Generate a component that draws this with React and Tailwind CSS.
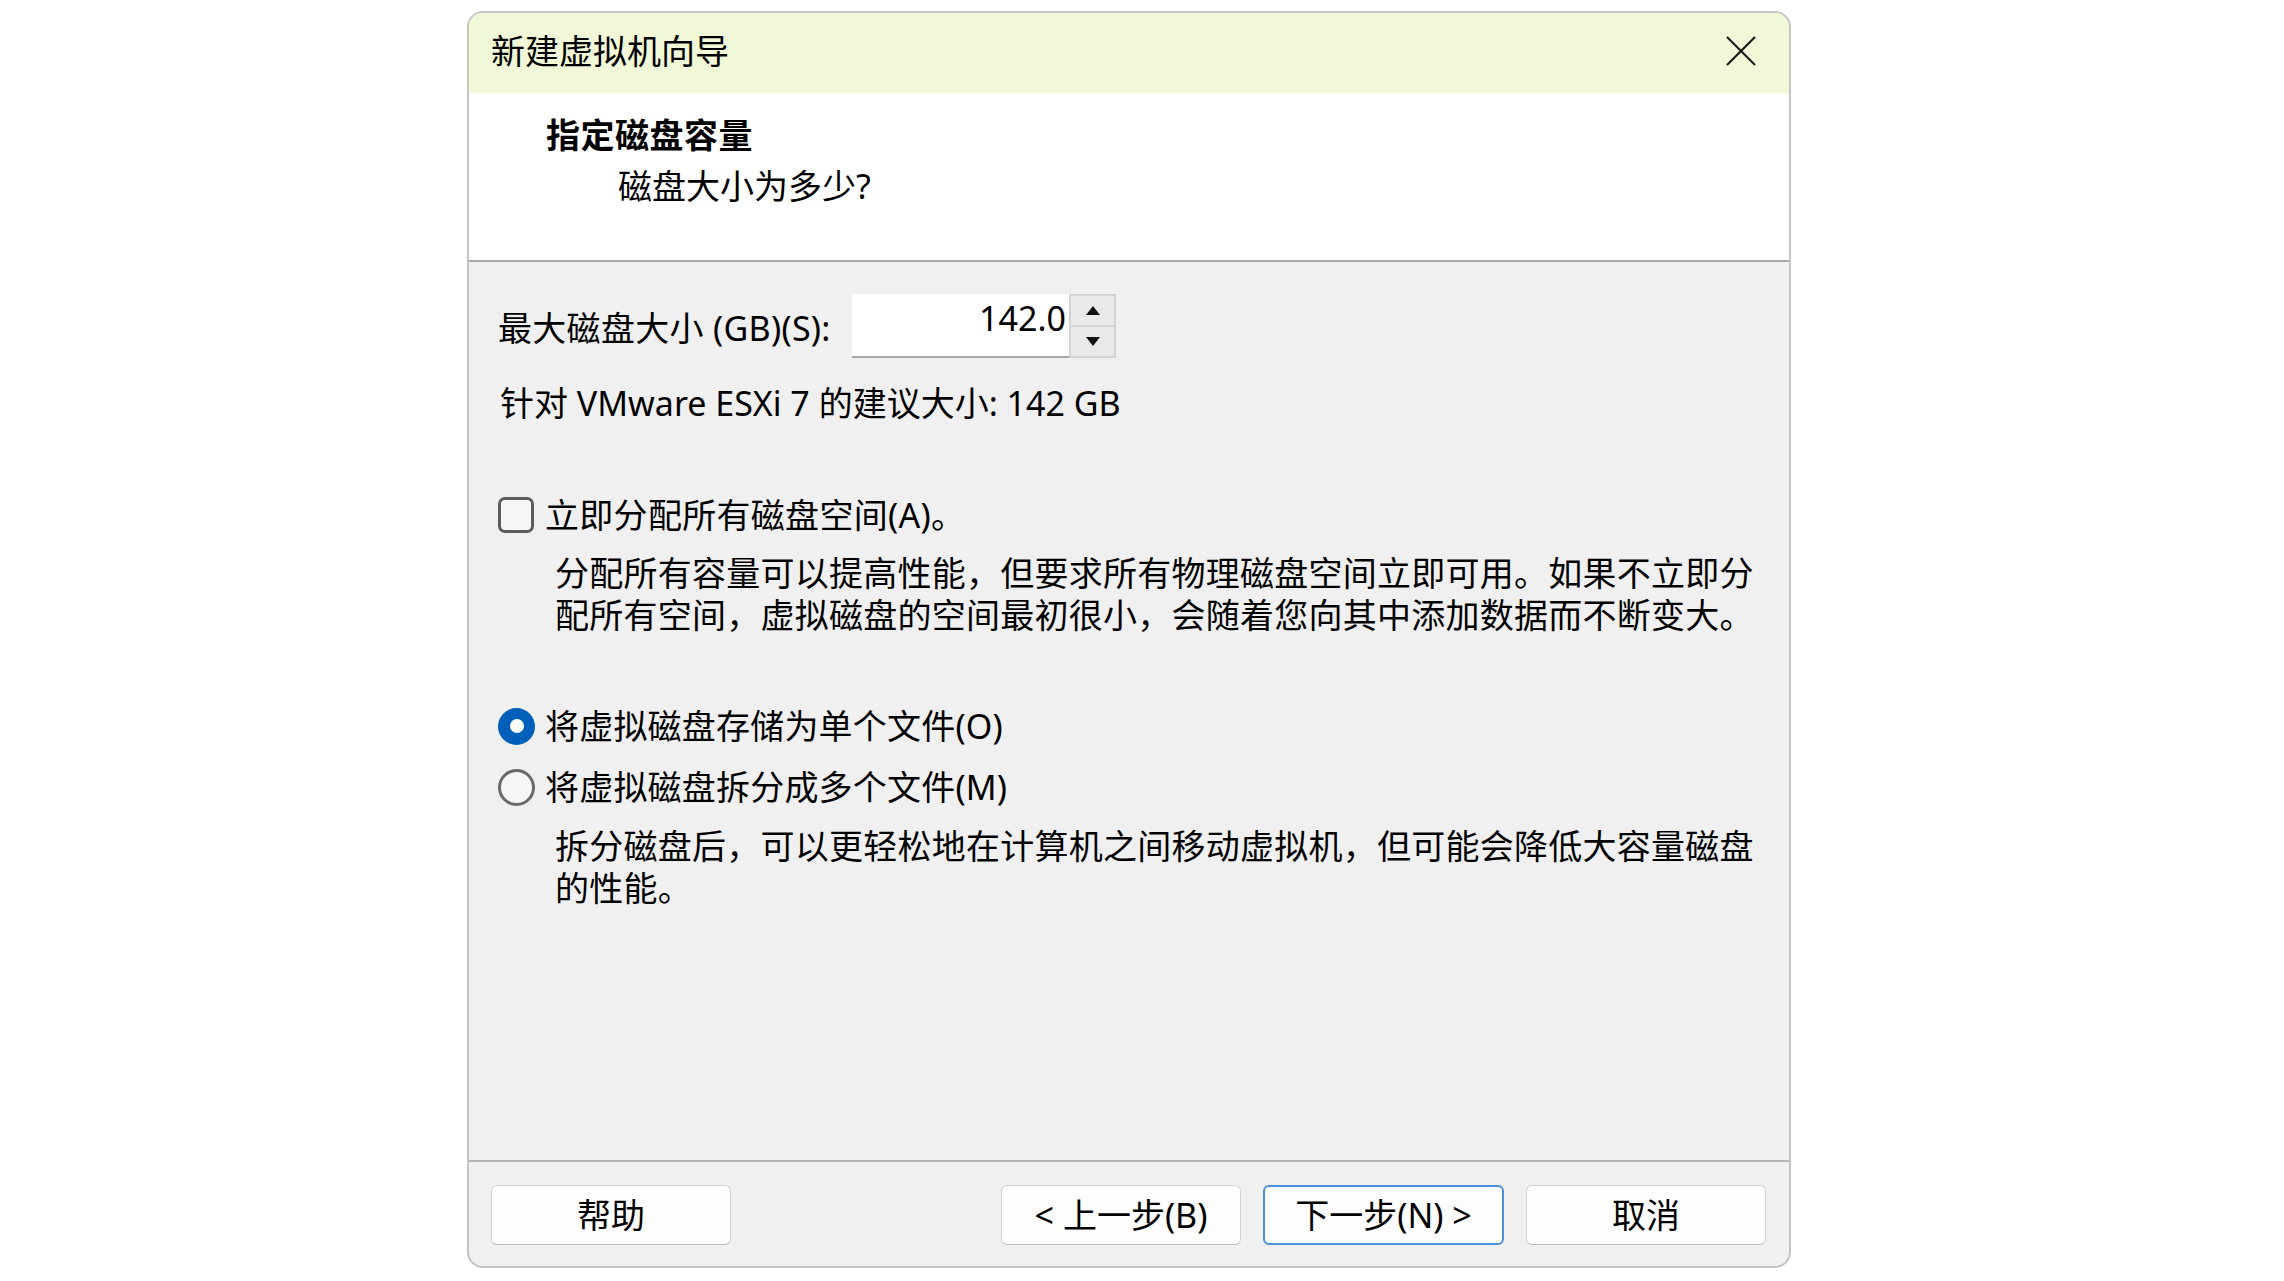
import React from "react";

const FONT = { fontFamily: '"Noto Sans", "Noto Sans CJK SC", sans-serif' };

function CloseIcon() {
  return (
    <svg width="32" height="32" viewBox="0 0 32 32" fill="none">
      <line x1="2" y1="2" x2="30" y2="30" stroke="#1a1a1a" strokeWidth="2.2" />
      <line x1="30" y1="2" x2="2" y2="30" stroke="#1a1a1a" strokeWidth="2.2" />
    </svg>
  );
}

function Tri({ up }) {
  return (
    <svg width="14" height="9" viewBox="0 0 14 9">
      {up ? <polygon points="7,0 14,9 0,9" fill="#111" /> : <polygon points="0,0 14,0 7,9" fill="#111" />}
    </svg>
  );
}

function Btn({ children, primary }) {
  return (
    <button
      className={
        primary
          ? "w-[241px] h-[60px] rounded-[6px] border-2 border-[#4a93dc] bg-[#fdfdfd] text-[34px] leading-[42px] text-black"
          : "w-[240px] h-[60px] rounded-[6px] border border-[#d2d2d2] border-b-[#bcbcbc] bg-[#fdfdfd] text-[34px] leading-[42px] text-black"
      }
      style={FONT}
    >
      {children}
    </button>
  );
}

export default function App() {
  return (
    <div className="w-full h-[1281px] bg-white overflow-hidden" style={FONT}>
      <div className="ml-[467px] mt-[11px] w-[1324px] h-[1257px] rounded-[16px] border-2 border-[#c4c4c4] overflow-hidden flex flex-col bg-[#f0f0f0] text-black">
        {/* Title bar */}
        <div className="h-[80px] shrink-0 bg-[#f1f8d7] flex items-center justify-between pl-[22px] pr-[32px] pb-[5px]">
          <div className="text-[34px] leading-[42px]">新建虚拟机向导</div>
          <CloseIcon />
        </div>
        {/* Header */}
        <div className="h-[169px] shrink-0 bg-white border-b-2 border-[#a8a8a8] flex flex-col pt-[21px]">
          <div className="pl-[77px] text-[34px] leading-[42px] font-bold tracking-[0.5px]">指定磁盘容量</div>
          <div className="pl-[149px] mt-[9px] text-[34px] leading-[42px]">磁盘大小为多少?</div>
        </div>
        {/* Body */}
        <div className="flex-1 flex flex-col pl-[29px] pt-[32px]">
          <div className="flex items-center">
            <div className="text-[34px] leading-[42px] w-[354px] tracking-[0.3px] pt-[4px]">最大磁盘大小 (GB)(S):</div>
            <div className="flex">
              <div className="w-[217px] h-[64px] bg-white border-b-2 border-[#a6a6a6] flex items-start justify-end pr-[3px] pt-[3px] text-[34px] leading-[42px]">
                142.0
              </div>
              <div className="w-[47px] h-[64px] flex flex-col border border-[#cfcfcf] bg-[#e6e6e6]">
                <div className="flex-1 flex items-center justify-center border border-[#d6d6d6] bg-[#e9e9e9]">
                  <Tri up />
                </div>
                <div className="flex-1 flex items-center justify-center border border-[#d6d6d6] bg-[#e9e9e9]">
                  <Tri />
                </div>
              </div>
            </div>
          </div>
          <div className="mt-[24px] pl-[2px] text-[34px] leading-[42px]">针对 VMware ESXi 7 的建议大小: 142 GB</div>

          <div className="mt-[70px] flex items-center">
            <div className="w-[36px] h-[36px] rounded-[7px] border-[3px] border-[#5c5c5c] bg-[#f6f6f6]" />
            <div className="ml-[11px] text-[34px] leading-[42px] tracking-[0.3px]">立即分配所有磁盘空间(A)。</div>
          </div>
          <div className="mt-[16px] pl-[57px] text-[34px] leading-[42px] whitespace-nowrap tracking-[0.25px]">
            <div>分配所有容量可以提高性能，但要求所有物理磁盘空间立即可用。如果不立即分</div>
            <div>配所有空间，虚拟磁盘的空间最初很小，会随着您向其中添加数据而不断变大。</div>
          </div>

          <div className="mt-[69px] flex items-center">
            <div className="w-[37px] h-[37px] rounded-full bg-[#005fb8] flex items-center justify-center">
              <div className="w-[14px] h-[14px] rounded-full bg-white" />
            </div>
            <div className="ml-[10px] text-[34px] leading-[42px] tracking-[0.2px]">将虚拟磁盘存储为单个文件(O)</div>
          </div>
          <div className="mt-[19px] flex items-center">
            <div className="w-[37px] h-[37px] rounded-full border-[3px] border-[#6a6a6a] bg-[#f6f6f6]" />
            <div className="ml-[10px] text-[34px] leading-[42px] tracking-[0.2px]">将虚拟磁盘拆分成多个文件(M)</div>
          </div>
          <div className="mt-[17px] pl-[57px] text-[34px] leading-[42px] whitespace-nowrap tracking-[0.25px]">
            <div>拆分磁盘后，可以更轻松地在计算机之间移动虚拟机，但可能会降低大容量磁盘</div>
            <div>的性能。</div>
          </div>
        </div>
        {/* Footer */}
        <div className="h-[106px] shrink-0 border-t-2 border-[#b4b4b4] flex items-start pt-[23px] pl-[22px] pr-[23px]">
          <Btn>帮助</Btn>
          <div className="flex-1" />
          <div className="flex gap-[22px]">
            <Btn>&lt; 上一步(B)</Btn>
            <Btn primary>下一步(N) &gt;</Btn>
            <Btn>取消</Btn>
          </div>
        </div>
      </div>
    </div>
  );
}
